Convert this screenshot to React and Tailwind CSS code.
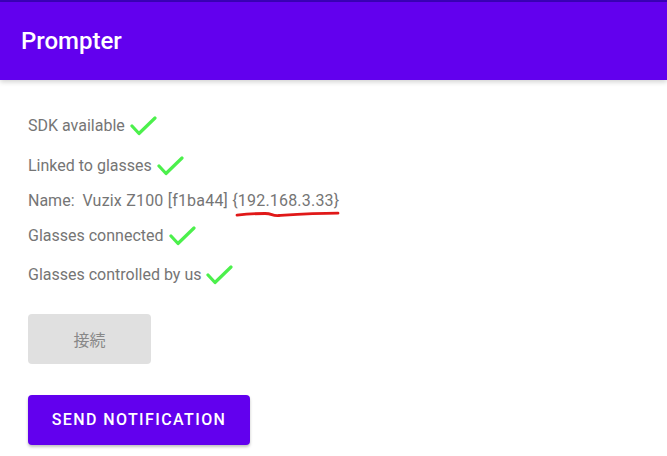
import React from "react";

const Check = () => (
  <svg width="27" height="21" viewBox="0 0 27 21" className="ml-[5px] shrink-0">
    <path d="M2 10 L9 17.5 L25 2" fill="none" stroke="#4cf04c" strokeWidth="3.2" strokeLinecap="round" strokeLinejoin="round" />
  </svg>
);

const App = () => {
  return (
    <div className="w-[667px] h-[456px] bg-white overflow-hidden relative" style={{ fontFamily: "Roboto, 'Noto Sans CJK JP', sans-serif" }}>
      {/* App bar */}
      <div className="h-[2px] bg-[#3a00b8]" />
      <div className="h-[78px] bg-[#6200ee] flex items-center px-[21px] shadow-[0_2px_5px_rgba(0,0,0,0.18)] relative z-10">
        <span className="text-white text-[24px] font-medium">Prompter</span>
      </div>

      {/* Status */}
      <div className="px-[28px] pt-[30px] text-[16px] text-[#757575]">
        <div className="h-[32px] flex items-center">
          <span>SDK available</span>
          <Check />
        </div>
        <div className="h-[32px] mt-[8px] flex items-center">
          <span>Linked to glasses</span>
          <Check />
        </div>
        <div className="h-[22px] mt-[8px] flex items-center relative">
          <span className="whitespace-pre">Name:  </span>
          <span className="whitespace-pre tracking-[0.2px]">Vuzix Z100 [f1ba44] {"{192.168.3.33}"}</span>
          <svg width="106" height="8" viewBox="0 0 106 8" className="absolute left-[207px] top-[20px]">
            <path d="M2 5.2 C12 4 22 3.5 30 3.5 C38 3.5 36 6 44 5.5 C60 4.5 80 3.2 103 3.2" fill="none" stroke="#e01818" strokeWidth="2.8" strokeLinecap="round" />
          </svg>
        </div>
        <div className="h-[32px] mt-[8px] flex items-center">
          <span>Glasses connected</span>
          <Check />
        </div>
        <div className="h-[32px] mt-[7px] flex items-center">
          <span>Glasses controlled by us</span>
          <Check />
        </div>

        {/* Buttons */}
        <div className="mt-[23px] w-[123px] h-[50px] rounded-[4px] bg-[#e0e0e0] flex items-center justify-center text-[#888888] text-[16px]" style={{ fontFamily: "'Noto Sans CJK JP', sans-serif" }}>
          接続
        </div>
        <div className="mt-[31px] w-[222px] h-[50px] rounded-[4px] bg-[#6200ee] flex items-center justify-center text-white text-[16px] font-medium tracking-[1.4px] shadow-[0_2px_3px_rgba(0,0,0,0.25)]">
          SEND NOTIFICATION
        </div>
      </div>
    </div>
  );
};

export default App;
